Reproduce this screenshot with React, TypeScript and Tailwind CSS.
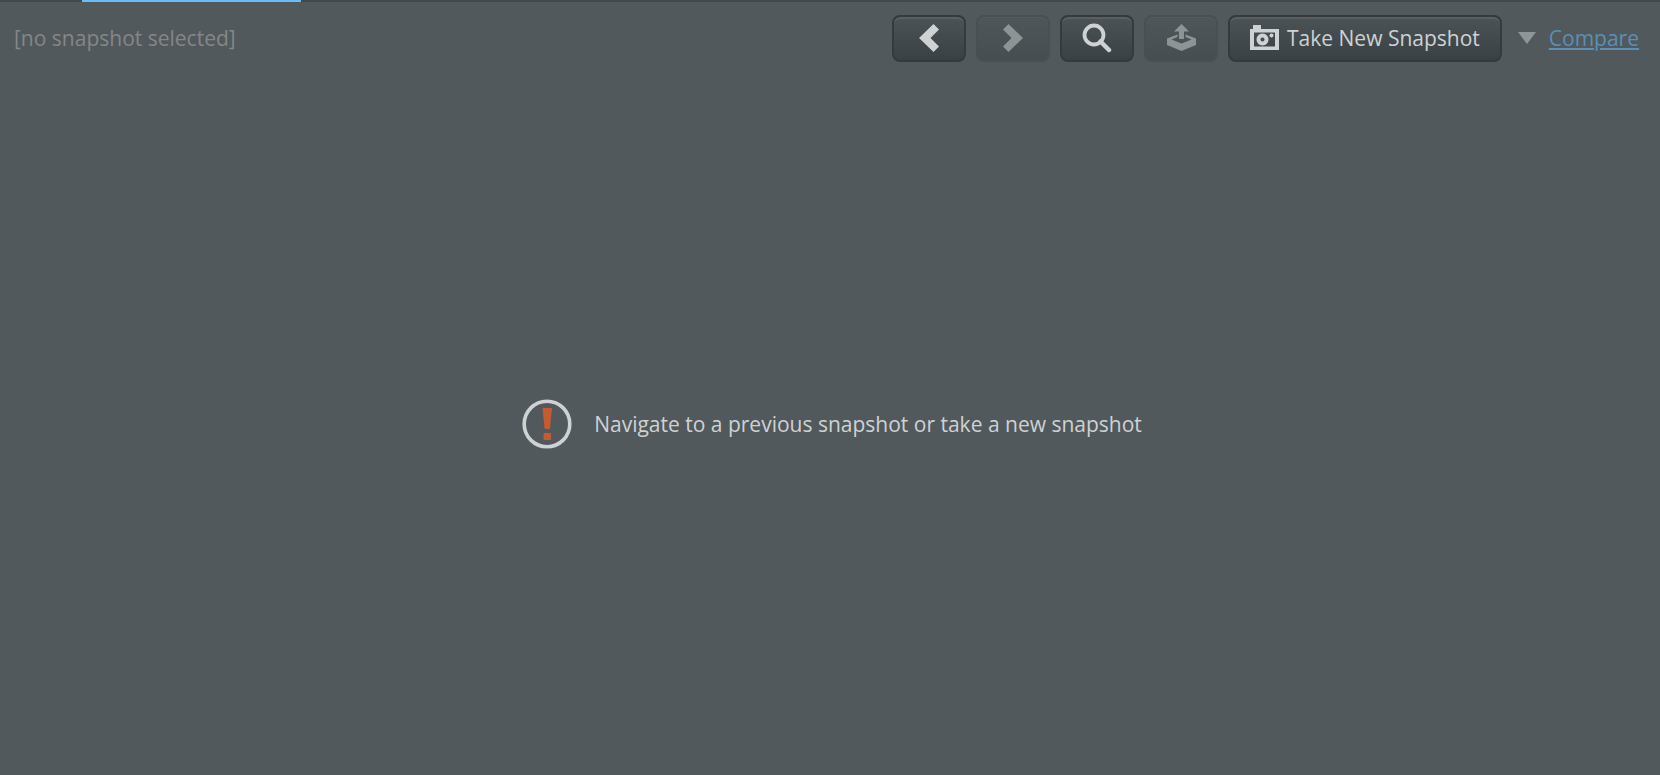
import type { ButtonHTMLAttributes } from 'react';

function ToolButton({
  className = 'w-[74px]',
  children,
  ...props
}: ButtonHTMLAttributes<HTMLButtonElement>) {
  return (
    <button
      type="button"
      className={`flex h-[47px] shrink-0 items-center justify-center rounded-lg border-2 border-[#343a3d] bg-linear-to-b from-[#4b5356] to-[#394144] pb-[2px] text-[#cfd2d3] shadow-[inset_0_2px_0_#596062] disabled:border-[#475053] disabled:from-[#4e5659] disabled:to-[#464e51] disabled:text-[#8c9496] disabled:shadow-[inset_0_1px_0_#545c5f] ${className}`}
      {...props}
    >
      {children}
    </button>
  );
}

function CameraIcon() {
  return (
    <svg width="29" height="25" viewBox="0 0 29 25" fill="currentColor" aria-hidden="true">
      <path fillRule="evenodd" d="M0 4h3V0h8v4h18v21H0zM4 7.500v14h21v-14z" />
      <path
        fillRule="evenodd"
        d="M12.500 8.500a6 6 0 1 0 .01 0zM12.500 12.500a2 2 0 1 1-.01 0z"
      />
      <circle cx="21.500" cy="10.500" r="2" />
    </svg>
  );
}

function ExportIcon() {
  return (
    <svg width="29" height="27" viewBox="0 0 29 27" fill="currentColor" aria-hidden="true">
      <path d="M14.500 0L22 7.500h-5V15h-5V7.500H7z" />
      <path
        fillRule="evenodd"
        d="M10.500 10.500L0 14.500V21l14.500 6L29 21v-6.500l-10.500-4v2.500l6 2.500-10 4-10-4 6-2.500z"
      />
    </svg>
  );
}

export default function App() {
  return (
    <div className="flex min-h-screen flex-col bg-[#51595c] font-['Open_Sans',sans-serif] text-[21px] leading-[28px] text-[#cfd2d3]">
      <div className="h-[2px] bg-[#42494c] pl-[82px]">
        <div className="h-full w-[219px] bg-[#69bcf8]" />
      </div>

      <header className="flex items-center justify-between pt-[13px] pr-[21px] pl-[14px]">
        <span className="pb-[2px] text-[#868686]">[no snapshot selected]</span>

        <div className="flex items-center gap-[10px]">
          <ToolButton aria-label="Previous snapshot">
            <svg width="20" height="28" viewBox="0 0 20 28" fill="currentColor" aria-hidden="true">
              <path d="M14.500 0L20 5.500 11.500 14 20 22.500 14.500 28 0 14z" />
            </svg>
          </ToolButton>
          <ToolButton aria-label="Next snapshot" disabled>
            <svg width="20" height="28" viewBox="0 0 20 28" fill="currentColor" aria-hidden="true">
              <path d="M5.500 0L0 5.500 8.500 14 0 22.500 5.500 28 20 14z" />
            </svg>
          </ToolButton>
          <ToolButton aria-label="Search snapshots">
            <svg width="30" height="30" viewBox="0 0 30 30" fill="none" stroke="currentColor" aria-hidden="true">
              <circle cx="12" cy="12" r="9.500" strokeWidth="3.800" />
              <path d="M18.500 18.500L27 27" strokeWidth="4.500" strokeLinecap="round" />
            </svg>
          </ToolButton>
          <ToolButton aria-label="Export snapshot" disabled>
            <ExportIcon />
          </ToolButton>
          <ToolButton className="gap-2 px-[20px]">
            <CameraIcon />
            Take New Snapshot
          </ToolButton>

          <div className="flex items-center gap-[13px] pb-[2px] pl-[6px]">
            <button type="button" aria-label="Snapshot options" className="text-[#8e9697]">
              <svg width="18" height="12" viewBox="0 0 18 12" fill="currentColor" aria-hidden="true">
                <path d="M0 0h18L9 12z" />
              </svg>
            </button>
            <a href="#compare" className="text-[#5b8fb4] underline decoration-2 underline-offset-2">
              Compare
            </a>
          </div>
        </div>
      </header>

      <main className="flex flex-1 items-center justify-center gap-[22px] pt-[10px] pl-1">
        <svg width="50" height="50" viewBox="0 0 50 50" aria-hidden="true">
          <circle cx="25" cy="25" r="22.800" fill="none" stroke="#cfd2d3" strokeWidth="3.600" />
          <path
            d="M20.500 9h9.500l-2 20q-.2 1-1 1h-3.500q-.8 0-1-1zM22.500 34h5.500q1 0 1 1v5q0 1-1 1h-5.500q-1 0-1-1v-5q0-1 1-1z"
            fill="#c75b30"
          />
        </svg>
        <p>Navigate to a previous snapshot or take a new snapshot</p>
      </main>
    </div>
  );
}
